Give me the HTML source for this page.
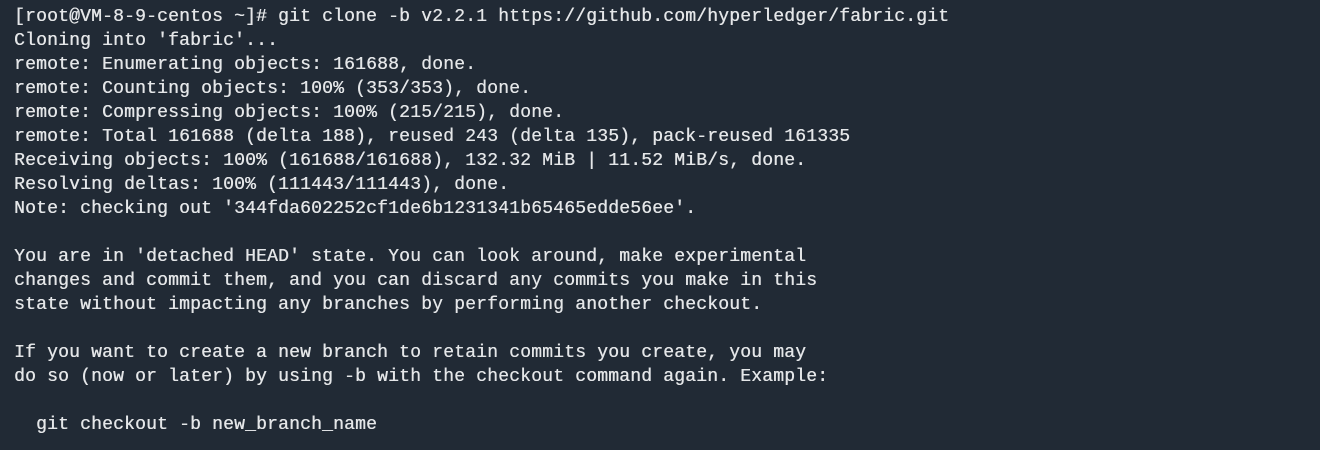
<!DOCTYPE html>
<html><head><style>
html,body{margin:0;padding:0;background:#212a35;width:1320px;height:450px;overflow:hidden}
pre{margin:0;position:absolute;left:14px;top:5px;font-family:"Liberation Mono",monospace;font-size:18px;line-height:24px;color:#e4e6e8;letter-spacing:0.2px;text-shadow:0.35px 0 0 #e4e6e8}
</style></head><body>
<pre>[root@VM-8-9-centos ~]# git clone -b v2.2.1 https://github.com/hyperledger/fabric.git
Cloning into 'fabric'...
remote: Enumerating objects: 161688, done.
remote: Counting objects: 100% (353/353), done.
remote: Compressing objects: 100% (215/215), done.
remote: Total 161688 (delta 188), reused 243 (delta 135), pack-reused 161335
Receiving objects: 100% (161688/161688), 132.32 MiB | 11.52 MiB/s, done.
Resolving deltas: 100% (111443/111443), done.
Note: checking out '344fda602252cf1de6b1231341b65465edde56ee'.

You are in 'detached HEAD' state. You can look around, make experimental
changes and commit them, and you can discard any commits you make in this
state without impacting any branches by performing another checkout.

If you want to create a new branch to retain commits you create, you may
do so (now or later) by using -b with the checkout command again. Example:

  git checkout -b new_branch_name
</pre>
</body></html>
